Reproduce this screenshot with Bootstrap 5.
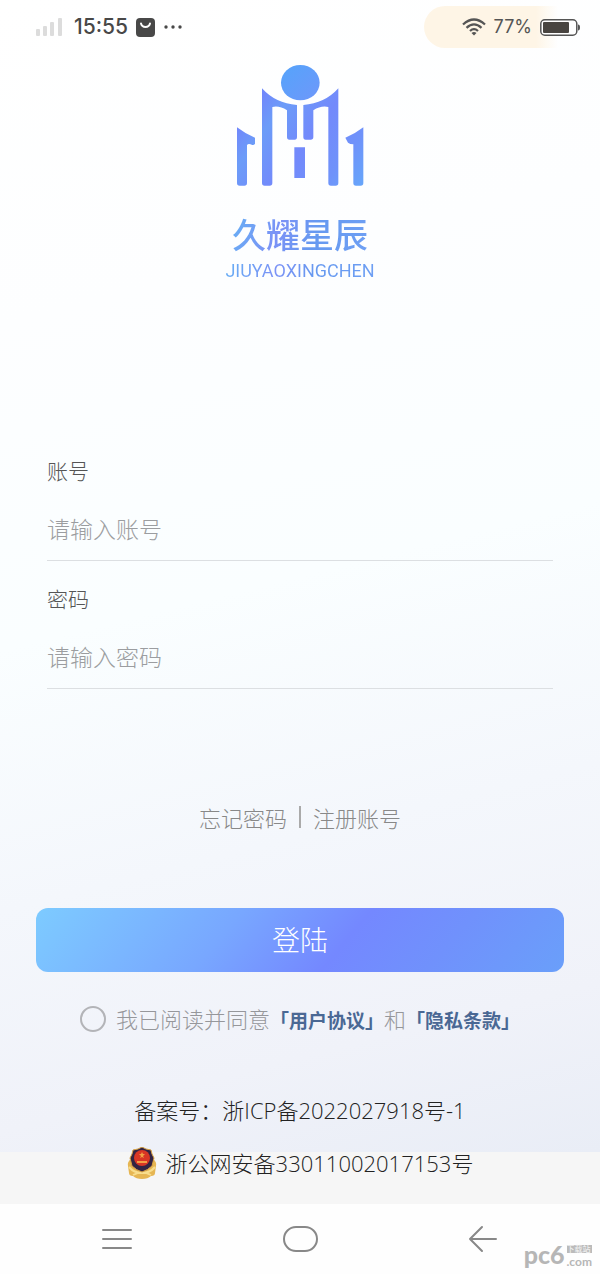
<!DOCTYPE html>
<html lang="zh-CN">
<head>
<meta charset="utf-8">
<meta name="viewport" content="width=device-width, initial-scale=1">
<title>久耀星辰 登录</title>
<link href="https://cdn.jsdelivr.net/npm/bootstrap@5.3.0/dist/css/bootstrap.min.css" rel="stylesheet">
<style>
body{font-family:"Noto Sans CJK SC",sans-serif;font-weight:300;font-size:22px;line-height:32px;color:#333;background:#fefefe}
a{text-decoration:none}
.screen{background:linear-gradient(166deg,#fff 0%,#fdfeff 25%,#fafeff 50%,#f4f7fc 70%,#f0f2f9 87%,#e9edf6 100%)}
.status{height:54px;padding:0 20px 0 36px}
.clock{font-family:Inter,sans-serif;font-size:21px;font-weight:500;color:#484848}
.power{height:42px;padding-left:38px;background:linear-gradient(90deg,#fef5e6 0 112px,transparent 134px);border-radius:21px;font-family:Inter,sans-serif;font-size:18px;font-weight:400;color:#555}
.brand{padding-top:9px}
.tint{color:transparent;background:linear-gradient(110deg,#66b0f4,#7b92f6 35%,#6699f0 60%,#6fa0f4);-webkit-background-clip:text;background-clip:text}
.brand-name{font-size:34px;line-height:44px;font-weight:500;margin-top:25px}
.brand-latin{font-family:Roboto,sans-serif;font-size:18px;line-height:28px;font-weight:400;margin-top:1px}
.fields{padding:0 47px;margin-top:171px}
.field{margin-bottom:23px}
.field label{color:#555;font-size:21px;line-height:28px}
.field .form-control{height:61px;margin-top:16px;padding:0 0 4px;border:0;border-bottom:1px solid #dcdfe2;border-radius:0;background:none;font-size:23px;font-weight:300;box-shadow:none}
.field .form-control::placeholder{color:#9b9da0;opacity:1}
.helpers{margin-top:112px;color:#888;gap:12px}
.helpers a{color:#888}
.helpers i{width:2px;height:22px;background:#aaa}
.actions{padding:0 36px;margin-top:75px}
.btn-login{height:64px;padding:0 0 2px;border:0;border-radius:12px;color:#fff;font-size:28px;font-weight:300;background:linear-gradient(130deg,#7dcbff 0%,#78a7ff 36%,#7488ff 58%,#7091fc 76%,#6a9ffa 100%)}
.btn-login:hover{color:#fff}
.agree{margin-top:30px;color:#96979b}
.agree label,.agree span{padding-bottom:2px}
.agree .form-check-input{width:26px;height:26px;margin:0 10px 0 0;border:2px solid #b3b4b8;border-radius:50%;background-color:transparent}
.agree a{padding-top:2px;font-size:19px;font-weight:700;color:#4a6894}
.filing{font-family:"Open Sans","Noto Sans CJK SC",sans-serif;color:#222}
.record{margin-top:58px;padding-bottom:20px}
.police{height:52px;background:#f6f6f6}
.police div{height:22px;gap:9px}
.sysnav{height:70px;padding:0 26px 6px}
.sysnav svg{stroke:#888;stroke-width:2;fill:none;stroke-linecap:round;stroke-linejoin:round}
.stamp{right:8px;bottom:8px;gap:2px;font-family:Lato,sans-serif;color:#b6b6b6;line-height:1}
.stamp b{font-size:25px;font-weight:900;line-height:24px}
.stamp span{gap:5px}
.stamp small{font-size:12px;line-height:8px;font-weight:700}
.stamp em{font:500 8px/8px "Noto Sans CJK SC",sans-serif;color:#eee;background:#bbb}
</style>
</head>
<body class="min-vh-100 d-flex flex-column position-relative">
<div class="screen flex-grow-1 d-flex flex-column">
  <header class="status d-flex align-items-center justify-content-between">
    <div class="d-flex align-items-center">
      <svg width="26" height="18" viewBox="0 0 26 18" fill="#dcdcdc" aria-hidden="true"><rect y="11" width="4" height="7" rx="1"/><rect x="7" y="8" width="4" height="10" rx="1"/><rect x="14" y="4" width="4" height="14" rx="1"/><rect x="22" width="4" height="18" rx="1"/></svg>
      <span class="clock ms-2 me-2 ps-1">15:55</span>
      <svg width="19" height="19" viewBox="0 0 19 19" aria-hidden="true"><rect width="19" height="19" rx="4" fill="#484848"/><path d="M5 5.500c1 4.500 8 4.500 9 0" fill="none" stroke="#fff" stroke-width="2" stroke-linecap="round"/></svg>
      <svg class="ms-2" width="22" height="6" viewBox="0 0 22 6" fill="#484848" aria-hidden="true"><circle cx="3" cy="3" r="1.700"/><circle cx="10" cy="3" r="1.700"/><circle cx="17" cy="3" r="1.700"/></svg>
    </div>
    <div class="power d-flex align-items-center">
      <svg width="24" height="18" viewBox="0 0 24 18" fill="none" stroke="#555" stroke-width="2.300" aria-hidden="true"><path d="M1 6.500Q12-3.500 23 6.500M4.500 9.800Q12 3 19.500 9.800M8 13Q12 9.300 16 13"/><path d="M9.500 15q2.500-2 5 0L12 17.500z" fill="#555" stroke="none"/></svg>
      <span class="mx-2">77%</span>
      <svg width="40" height="17" viewBox="0 0 40 17" aria-hidden="true"><rect x=".8" y=".8" width="36" height="15.400" rx="4" fill="#fff" stroke="#555" stroke-width="1.500"/><rect x="3" y="3" width="26" height="11" rx="1" fill="#484440"/><path d="M38 5.500q2 0 2 3t-2 3z" fill="#555"/></svg>
    </div>
  </header>

  <main>
    <div class="brand d-flex flex-column align-items-center">
      <svg width="146" height="124" viewBox="21 24 438 372" role="img" aria-label="久耀星辰标志">
        <defs>
          <linearGradient id="head" x1="0" y1="0" x2="1" y2="1"><stop stop-color="#55a4fb"/><stop offset="1" stop-color="#6e97fa"/></linearGradient>
          <linearGradient id="towers" gradientUnits="userSpaceOnUse" x1="50" y1="100" x2="430" y2="390"><stop stop-color="#63a2fa"/><stop offset=".15" stop-color="#7187fb"/><stop offset=".3" stop-color="#6c9cf8"/><stop offset=".55" stop-color="#7389fb"/><stop offset=".8" stop-color="#6f92fa"/><stop offset="1" stop-color="#67a6fa"/></linearGradient>
        </defs>
        <ellipse cx="241" cy="83" rx="58" ry="53" fill="url(#head)"/>
        <g fill="url(#towers)">
          <path d="M126 100Q166 145 231 150V246Q231 254 224 254H208Q201 254 201 246V166Q178 151 157 156V384Q157 392 149 392H134Q126 392 126 384Z"/>
          <path d="M355 100Q315 145 250 150V246Q250 254 257 254H272Q280 254 280 246V166Q303 151 325 156V384Q325 392 333 392H347Q355 392 355 384Z"/>
          <path d="M223 277H255V369H223ZM51 217Q75 236 105 248V266Q102 271 97 270Q84 263 81 271V384Q81 392 73 392H59Q51 392 51 384ZM430 217Q406 236 376 248L384 263Q390 268 400 268V384Q400 392 408 392H422Q430 392 430 384Z"/>
        </g>
      </svg>
      <div class="brand-name tint">久耀星辰</div>
      <div class="brand-latin tint">JIUYAOXINGCHEN</div>
    </div>

    <form>
      <div class="fields">
        <div class="field"><label class="d-block" for="account">账号</label><input class="form-control" id="account" type="text" placeholder="请输入账号"></div>
        <div class="field"><label class="d-block" for="password">密码</label><input class="form-control" id="password" type="password" placeholder="请输入密码"></div>
      </div>
      <div class="helpers d-flex justify-content-center align-items-center"><a href="#">忘记密码</a><i></i><a href="#">注册账号</a></div>
      <div class="actions"><button class="btn btn-login w-100" type="button">登陆</button></div>
      <div class="agree d-flex justify-content-center align-items-center">
        <input class="form-check-input" type="checkbox" id="agree"><label for="agree">我已阅读并同意</label><a href="#">「用户协议」</a><span>和</span><a href="#">「隐私条款」</a>
      </div>
    </form>
    <div class="record filing text-center">备案号：浙ICP备2022027918号-1</div>
  </main>
</div>

<div class="police filing">
  <div class="d-flex justify-content-center align-items-center">
    <svg width="30" height="32" viewBox="0 0 30 32" aria-hidden="true">
      <path d="M4 12Q0 15 1 19L2 26Q2 29 6 29Q9 32 15 32T24 29Q28 29 28 26L29 19Q30 15 26 12Z" fill="#e6b653"/>
      <path d="M2 20q5 6 13 6t13-6M6 28q9-5 18 0" fill="none" stroke="#f8dd8c" stroke-width="2"/>
      <path d="M15 0l4 2 5 1 1 4 2 4-2 8Q21 23 15 25Q9 23 5 19L3 11 5 7 6 3l5-1z" fill="#332443" stroke="#d9a344"/>
      <circle cx="15" cy="11" r="8" fill="#d93625"/>
      <path d="M15 5l1 2h2l-2 2 1 2-2-1-2 1 1-2-2-2h2zM10 14h10v2H10z" fill="#f3a044"/>
    </svg>
    <span>浙公网安备33011002017153号</span>
  </div>
</div>

<nav class="sysnav row g-0 align-items-center text-center">
  <div class="col"><button class="btn p-0 border-0" aria-label="菜单"><svg class="d-block" width="32" height="28"><path d="M2 5H30M2 14H30M2 23H30"/></svg></button></div>
  <div class="col"><button class="btn p-0 border-0" aria-label="主页"><svg class="d-block" width="36" height="28"><rect x="2" y="2" width="33" height="24" rx="12"/></svg></button></div>
  <div class="col"><button class="btn p-0 border-0" aria-label="返回"><svg class="d-block" width="30" height="28"><path d="M14 2L2 14L14 26M2 14H28"/></svg></button></div>
</nav>
<div class="stamp position-absolute d-flex align-items-end"><b>pc6</b><span class="d-flex flex-column"><em>下载站</em><small>.com</small></span></div>
<script src="https://cdn.jsdelivr.net/npm/bootstrap@5.3.0/dist/js/bootstrap.bundle.min.js"></script>
</body>
</html>
